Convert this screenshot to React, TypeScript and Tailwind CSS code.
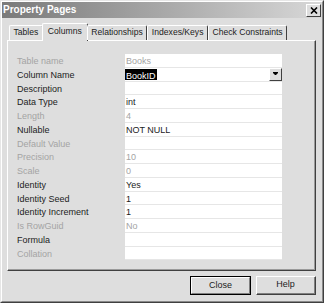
import React from "react";

const rows: { label: string; value: string; disabled?: boolean; hl?: boolean; dd?: boolean }[] = [
  { label: "Table name", value: "Books", disabled: true },
  { label: "Column Name", value: "BookID", hl: true, dd: true },
  { label: "Description", value: "" },
  { label: "Data Type", value: "int" },
  { label: "Length", value: "4", disabled: true },
  { label: "Nullable", value: "NOT NULL" },
  { label: "Default Value", value: "", disabled: true },
  { label: "Precision", value: "10", disabled: true },
  { label: "Scale", value: "0", disabled: true },
  { label: "Identity", value: "Yes" },
  { label: "Identity Seed", value: "1" },
  { label: "Identity Increment", value: "1" },
  { label: "Is RowGuid", value: "No", disabled: true },
  { label: "Formula", value: "" },
  { label: "Collation", value: "", disabled: true },
];

const tabs = ["Tables", "Columns", "Relationships", "Indexes/Keys", "Check Constraints"];

export default function App() {
  return (
    <div className="w-[324px] h-[303px] bg-[#dedede] border border-t-[#e6e6e6] border-l-[#e6e6e6] border-r-[#404040] border-b-[#404040] font-['Liberation_Sans',Arial,sans-serif] text-[9px] text-[#1c1c1c] overflow-hidden">
      <div className="h-full border border-t-white border-l-white border-r-[#8a8a8a] border-b-[#8a8a8a] flex flex-col">
        {/* title bar */}
        <div className="h-[16px] bg-gradient-to-r from-[#7a7a7a] to-[#d8d8d8] flex items-center justify-between pl-[1px] pr-[1px]">
          <span className="text-white font-bold text-[10px] leading-none">Property Pages</span>
          <div className="w-[15px] h-[13px] bg-[#dedede] border border-t-white border-l-white border-r-[#404040] border-b-[#404040] flex items-center justify-center">
            <svg width="8" height="7" viewBox="0 0 8 7">
              <path d="M1 0.5 L7 6.5 M7 0.5 L1 6.5" stroke="#000" strokeWidth="1.6" />
            </svg>
          </div>
        </div>
        {/* tabs */}
        <div className="mt-[6px] h-[16px] flex items-end pl-[7px] relative z-10 text-[8.6px]">
          {tabs.map((t) => {
            const sel = t === "Columns";
            return (
              <div
                key={t}
                className={
                  sel
                    ? "h-[18px] -mb-[1px] -mx-[1px] px-[5px] bg-[#dedede] border-t border-l border-t-white border-l-white border-r border-r-[#404040] rounded-t-[2px] flex items-start pt-[3px] leading-none"
                    : "h-[15px] px-[3.5px] border-t border-l border-t-white border-l-white border-r border-r-[#404040] rounded-t-[2px] flex items-start pt-[2px] leading-none"
                }
              >
                {t}
              </div>
            );
          })}
        </div>
        {/* panel */}
        <div className="ml-[5px] w-[309px] h-[231px] border border-t-white border-l-white border-r-[#404040] border-b-[#404040] shadow-[inset_-1px_-1px_0_#9a9a9a] pt-[13px] pl-[9px]">
          <div className="flex flex-col">
            {rows.map((r) => (
              <div key={r.label} className="flex h-[13.75px]">
                <div className={"w-[108px] leading-[13px] pt-[1px] " + (r.disabled ? "text-[#a4a4a4]" : "")}>
                  {r.label}
                </div>
                <div className="w-[157px] bg-white border-b border-b-[#e6e6e6] flex items-stretch justify-between">
                  <span className={"leading-[12px] pt-[1px] " + (r.disabled ? "text-[#a4a4a4] pl-[1px]" : r.hl ? "bg-black text-white px-[1px] mt-[1px] pt-0 h-[11px] leading-[11px]" : "pl-[1px]")}>
                    {r.value}
                  </span>
                  {r.dd && (
                    <div className="w-[13px] h-[13px] bg-[#dedede] border border-t-white border-l-white border-r-[#404040] border-b-[#404040] flex items-center justify-center">
                      <svg width="5" height="4" viewBox="0 0 5 4">
                        <path d="M0 0.5 H5 M0.5 1.5 H4.5 M1.5 2.5 H3.5" stroke="#000" strokeWidth="1" />
                      </svg>
                    </div>
                  )}
                </div>
              </div>
            ))}
          </div>
        </div>
        {/* buttons */}
        <div className="mt-[5px] flex justify-end gap-[5px] pr-[6px]">
          <div className="w-[61px] h-[19px] border border-black">
            <div className="w-full h-full border border-t-white border-l-white border-r-[#808080] border-b-[#808080] flex items-center justify-center">
              Close
            </div>
          </div>
          <div className="w-[60px] h-[19px] border border-t-white border-l-white border-r-[#404040] border-b-[#404040]">
            <div className="w-full h-full border-r border-b border-r-[#808080] border-b-[#808080] flex items-center justify-center">
              Help
            </div>
          </div>
        </div>
      </div>
    </div>
  );
}
